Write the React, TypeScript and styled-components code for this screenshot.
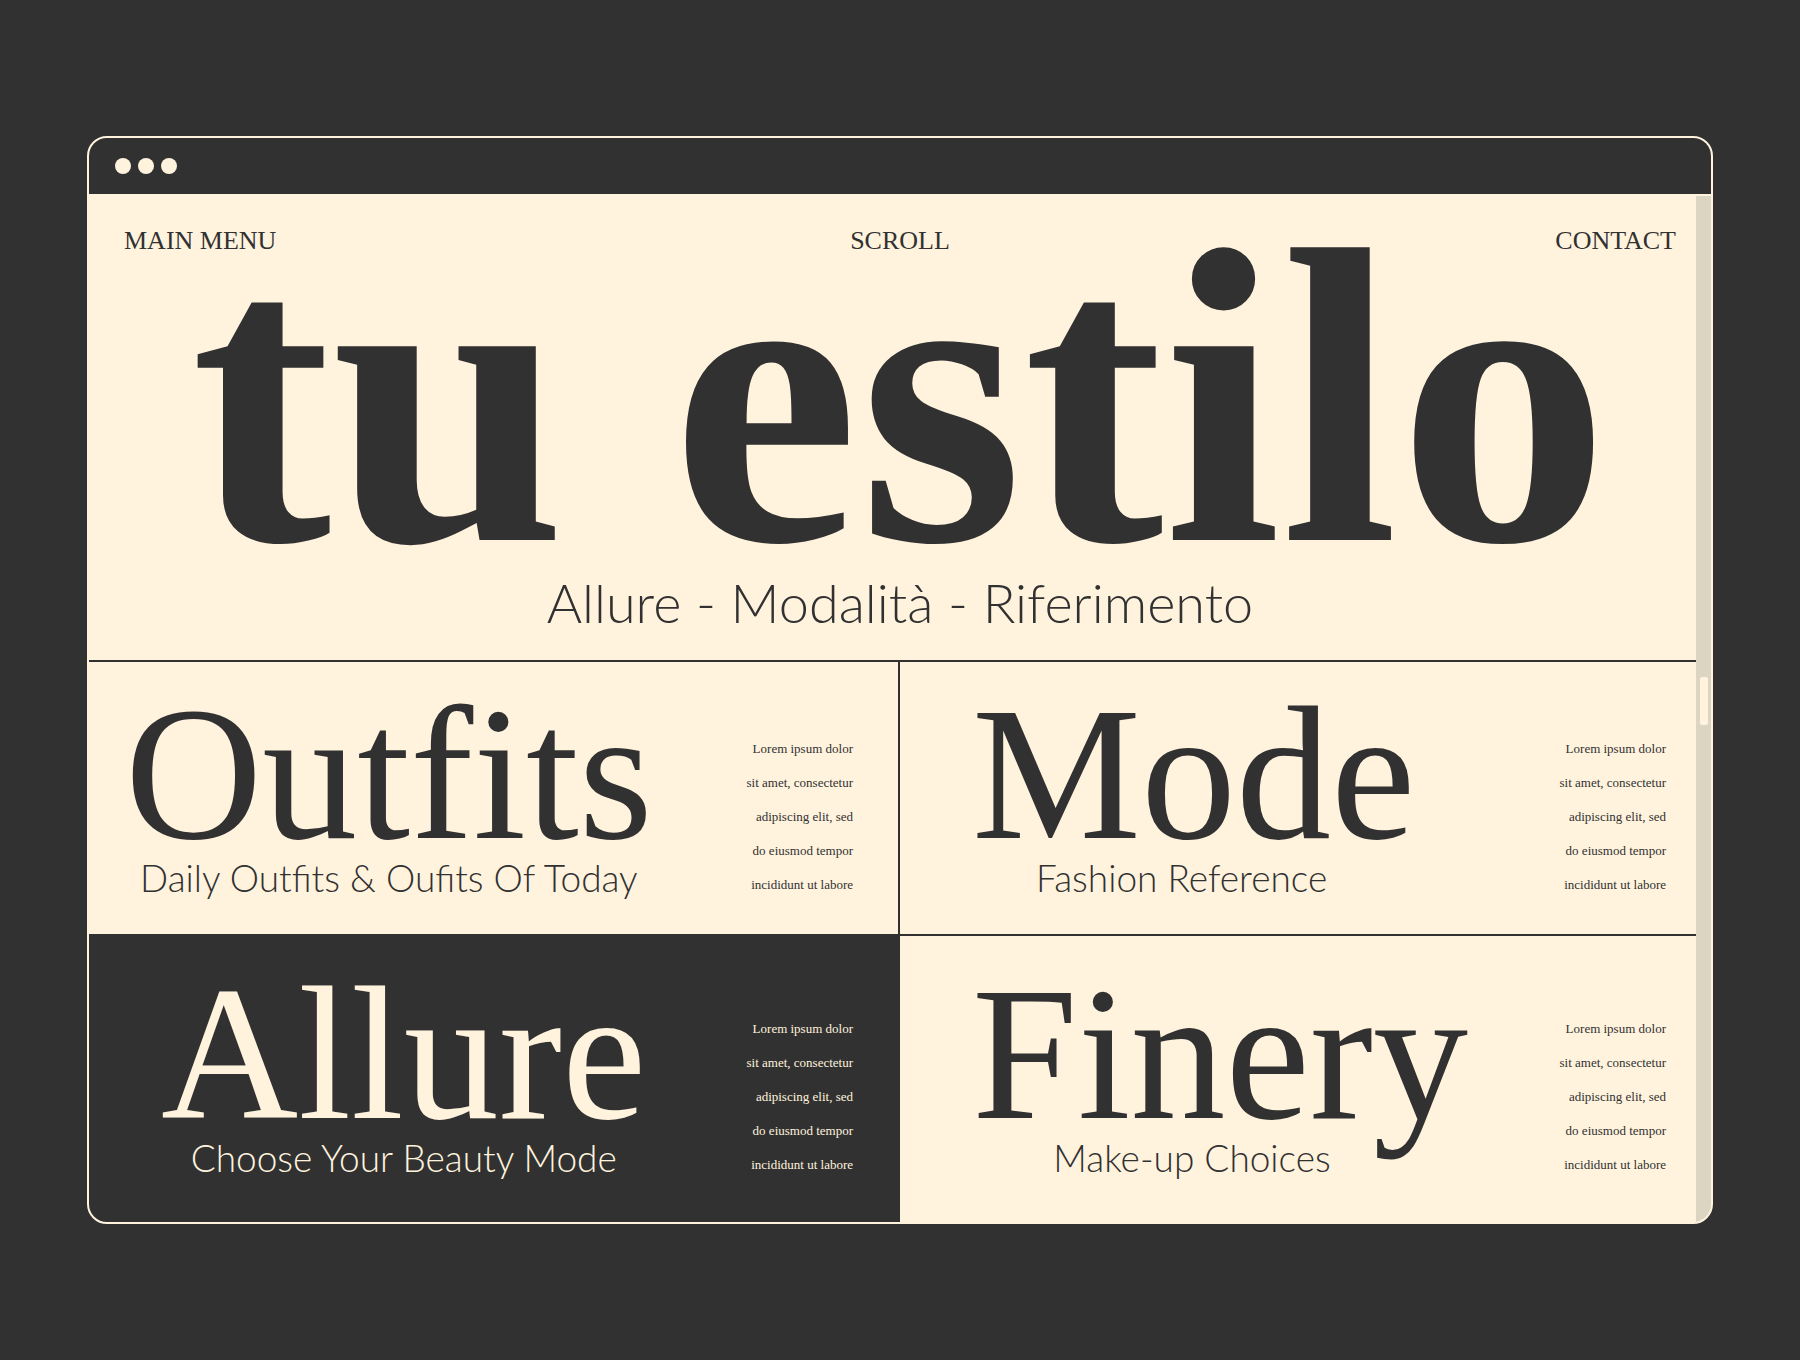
import React from 'react';
import styled, { createGlobalStyle } from 'styled-components';

const INK = '#313131';
const CREAM = '#fff3de';
const TRACK = '#dcd5c1';

const GlobalStyle = createGlobalStyle`
  * { box-sizing: border-box; }
  body {
    margin: 0;
    background: ${INK};
    color: ${INK};
    font-family: "Liberation Serif", "Times New Roman", serif;
  }
`;

const Page = styled.div`
  min-height: 100vh;
  padding: 136px 87px;
  display: flex;
  flex-direction: column;
`;

const BrowserWindow = styled.div`
  flex: 1;
  display: flex;
  flex-direction: column;
  border: 2px solid ${CREAM};
  border-radius: 20px;
  overflow: hidden;
  background: ${CREAM};
`;

const TitleBar = styled.div`
  height: 56px;
  padding: 0 26px;
  display: flex;
  align-items: center;
  gap: 7px;
  background: ${INK};
`;

const Dot = styled.span`
  width: 16px;
  height: 16px;
  border-radius: 50%;
  background: ${CREAM};
`;

const Viewport = styled.div`
  position: relative;
  flex: 1;
  display: flex;
  flex-direction: column;
`;

const ScrollTrack = styled.div`
  position: absolute;
  top: 2px;
  right: 0;
  bottom: 0;
  width: 15px;
  display: flex;
  justify-content: center;
  background: ${TRACK};
`;

const ScrollThumb = styled.div`
  width: 8px;
  height: 48px;
  margin-top: 481px;
  border-radius: 2px;
  background: ${CREAM};
`;

const Hero = styled.header`
  height: 468px;
  padding: 31px 35px 0;
  border-bottom: 2px solid ${INK};
  text-align: center;
`;

const Nav = styled.nav`
  display: grid;
  grid-template-columns: 1fr auto 1fr;
  line-height: 32px;
`;

const NavLink = styled.a<{ $align?: string }>`
  justify-self: ${(p) => p.$align ?? 'center'};
  color: inherit;
  font-size: 26px;
  text-decoration: none;
`;

const HeroTitle = styled.h1`
  margin: 0;
  font-size: 422px;
  font-weight: 700;
  line-height: 282px;
  white-space: nowrap;
`;

const HeroTagline = styled.p`
  margin: 0;
  padding-top: 32px;
  font-family: Lato, sans-serif;
  font-size: 54px;
  font-weight: 300;
  line-height: 64px;
`;

const Grid = styled.main`
  flex: 1;
  display: grid;
  grid-template-columns: 1fr 1fr;
  grid-template-rows: 274px 1fr;
`;

const Cell = styled.section<{ $dark?: boolean; $indent: number; $last?: boolean; $divider?: boolean }>`
  display: flex;
  justify-content: space-between;
  align-items: flex-start;
  padding: ${(p) => (p.$last ? 38 : 32)}px 45px 0 ${(p) => p.$indent}px;
  border-right: ${(p) => (p.$divider ? `2px solid ${INK}` : '0')};
  border-bottom: ${(p) => (p.$last ? '0' : `2px solid ${INK}`)};
  background: ${(p) => (p.$dark ? INK : CREAM)};
  color: ${(p) => (p.$dark ? CREAM : INK)};
`;

const Lockup = styled.div`
  text-align: center;
  white-space: nowrap;
`;

const CellTitle = styled.h2`
  margin: 0;
  font-size: 190px;
  font-weight: 400;
  line-height: 160px;
`;

const Caption = styled.p<{ $tail: number }>`
  margin: 0;
  padding-right: ${(p) => p.$tail}px;
  font-family: Lato, sans-serif;
  font-size: 37px;
  font-weight: 300;
  line-height: 48px;
`;

const Blurb = styled.p`
  margin: 0;
  padding-top: 38px;
  font-size: 13px;
  line-height: 34px;
  text-align: right;
  white-space: nowrap;
`;

const LINES = [
  'Lorem ipsum dolor',
  'sit amet, consectetur',
  'adipiscing elit, sed',
  'do eiusmod tempor',
  'incididunt ut labore',
];

const TOPICS = [
  { title: 'Outfits', caption: 'Daily Outfits & Oufits Of Today', indent: 36, tail: 0, divider: true },
  { title: 'Mode', caption: 'Fashion Reference', indent: 72, tail: 24 },
  { title: 'Allure', caption: 'Choose Your Beauty Mode', indent: 72, tail: 0, dark: true, last: true, divider: true },
  { title: 'Finery', caption: 'Make-up Choices', indent: 72, tail: 56, last: true },
];

export default function App() {
  return (
    <Page>
      <GlobalStyle />
      <BrowserWindow>
        <TitleBar>
          <Dot />
          <Dot />
          <Dot />
        </TitleBar>
        <Viewport>
          <Hero>
            <Nav>
              <NavLink href="#menu" $align="start">MAIN MENU</NavLink>
              <NavLink href="#scroll">SCROLL</NavLink>
              <NavLink href="#contact" $align="end">CONTACT</NavLink>
            </Nav>
            <HeroTitle>tu estilo</HeroTitle>
            <HeroTagline>Allure - Modalità - Riferimento</HeroTagline>
          </Hero>
          <Grid>
            {TOPICS.map((t) => (
              <Cell key={t.title} $dark={t.dark} $indent={t.indent} $last={t.last} $divider={t.divider}>
                <Lockup>
                  <CellTitle>{t.title}</CellTitle>
                  <Caption $tail={t.tail}>{t.caption}</Caption>
                </Lockup>
                <Blurb>
                  {LINES.map((line) => (
                    <React.Fragment key={line}>
                      {line}
                      <br />
                    </React.Fragment>
                  ))}
                </Blurb>
              </Cell>
            ))}
          </Grid>
          <ScrollTrack>
            <ScrollThumb />
          </ScrollTrack>
        </Viewport>
      </BrowserWindow>
    </Page>
  );
}
